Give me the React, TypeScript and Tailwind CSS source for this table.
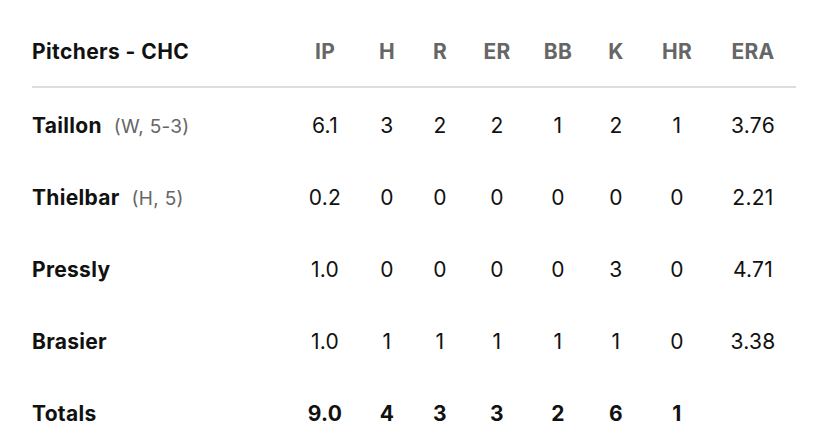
import React from 'react';

interface PitcherRow {
    name: string;
    note?: string;
    stats: string[];
}

const columns = ['IP', 'H', 'R', 'ER', 'BB', 'K', 'HR', 'ERA'];

const pitchers: PitcherRow[] = [
    { name: 'Taillon', note: '(W, 5-3)', stats: ['6.1', '3', '2', '2', '1', '2', '1', '3.76'] },
    { name: 'Thielbar', note: '(H, 5)', stats: ['0.2', '0', '0', '0', '0', '0', '0', '2.21'] },
    { name: 'Pressly', stats: ['1.0', '0', '0', '0', '0', '3', '0', '4.71'] },
    { name: 'Brasier', stats: ['1.0', '1', '1', '1', '1', '1', '0', '3.38'] },
];

const totals = ['9.0', '4', '3', '3', '2', '6', '1', ''];

const grid = 'grid grid-cols-[262px_62px_62px_44px_70px_52px_64px_58px_94px] items-center pt-[3px]';

export default function App() {
    return (
        <div className="w-[828px] h-[444px] overflow-hidden bg-white font-['Inter','Liberation_Sans',sans-serif] text-[#111] tracking-[0.3px]">
            <div className="ml-8 pt-[14px]">
                <div className={`${grid} h-[72px]`}>
                    <div className="text-[21px] font-bold tracking-[0.4px]">Pitchers - CHC</div>
                    {columns.map((c) => (
                        <div key={c} className="text-center text-[21px] font-bold text-[#666]">{c}</div>
                    ))}
                </div>
                <div className="h-[2px] w-[764px] bg-[#dddddd]" />

                {pitchers.map((p) => (
                    <div key={p.name} className={`${grid} h-[72px]`}>
                        <div className="flex items-baseline gap-3">
                            <span className="text-[21px] font-bold">{p.name}</span>
                            {p.note && <span className="text-[19px] text-[#666]">{p.note}</span>}
                        </div>
                        {p.stats.map((s, i) => (
                            <div key={i} className="text-center text-[21px]">{s}</div>
                        ))}
                    </div>
                ))}

                <div className={`${grid} h-[72px]`}>
                    <div className="text-[21px] font-bold">Totals</div>
                    {totals.map((s, i) => (
                        <div key={i} className="text-center text-[21px] font-bold">{s}</div>
                    ))}
                </div>
            </div>
        </div>
    );
}
